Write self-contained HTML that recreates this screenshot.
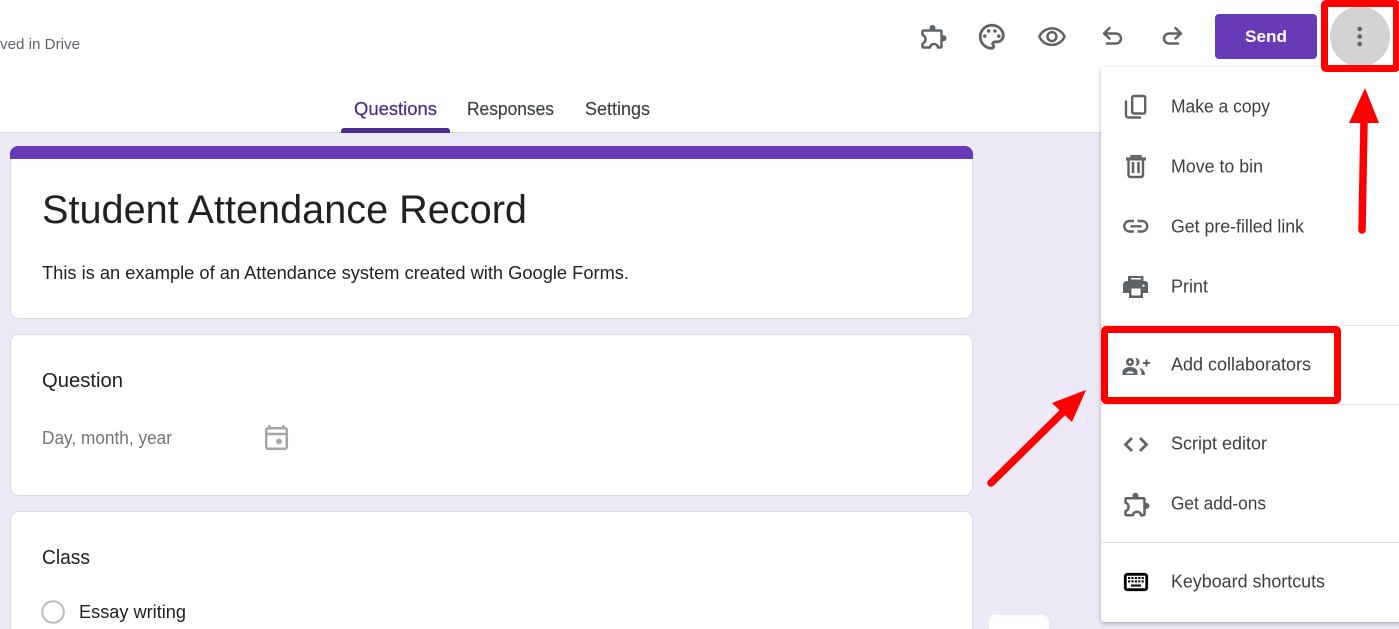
<!DOCTYPE html>
<html><head><meta charset="utf-8"><style>
html,body{margin:0;padding:0;width:1399px;height:629px;overflow:hidden;background:#fff}
svg{display:block}
text{font-family:"Liberation Sans",sans-serif}
</style></head><body>
<svg width="1399" height="629" viewBox="0 0 1399 629" xmlns="http://www.w3.org/2000/svg">
<defs>
<filter id="sh" x="-10%" y="-5%" width="120%" height="110%"><feDropShadow dx="0" dy="1.5" stdDeviation="2" flood-color="#000" flood-opacity=".3"/></filter>
<g id="ext">
<path fill="none" stroke="#5f6368" stroke-width="2.500" stroke-linejoin="round" d="M923.500 30.500H940.500A1 1 0 0 1 941.500 31.500V46.500A1 1 0 0 1 940.500 47.500H938A4 3.500 0 0 0 930 47.500H923.500A1 1 0 0 1 922.500 46.500V43.500A4.500 4.500 0 0 0 922.500 35V31.500A1 1 0 0 1 923.500 30.500Z"/>
<circle cx="932.500" cy="28" r="3" fill="#5f6368"/>
<circle cx="943.500" cy="38.200" r="3" fill="#5f6368"/>
</g>
</defs>
<rect width="1399" height="629" fill="#ede9f7"/>
<rect width="1399" height="132" fill="#fff"/>
<rect y="132" width="1399" height="1" fill="#dadce0"/>
<text x="0" y="49" font-size="14.5" fill="#5f6368" textLength="80" lengthAdjust="spacingAndGlyphs">ved in Drive</text>

<use href="#ext"/>
<g fill="#5f6368">
<g transform="translate(976.4 21.4) scale(1.28)" stroke="#5f6368" stroke-width=".25"><path d="M12 22C6.49 22 2 17.51 2 12S6.49 2 12 2s10 4.04 10 9c0 3.31-2.69 6-6 6h-1.77c-.28 0-.5.22-.5.5 0 .12.05.23.13.33.41.47.64 1.06.64 1.67 0 1.38-1.12 2.5-2.5 2.5zm0-18c-4.41 0-8 3.59-8 8s3.59 8 8 8c.28 0 .5-.22.5-.5 0-.16-.08-.28-.14-.35-.41-.46-.63-1.05-.63-1.65 0-1.38 1.12-2.5 2.5-2.5H16c2.21 0 4-1.79 4-4 0-3.86-3.59-7-8-7z"/><circle cx="6.5" cy="11.5" r="1.3"/><circle cx="9.5" cy="7.5" r="1.3"/><circle cx="14.5" cy="7.5" r="1.3"/><circle cx="17.5" cy="11.5" r="1.3"/></g>
<path transform="translate(1036.7 22) scale(1.27)" d="M12 6c3.79 0 7.17 2.13 8.82 5.5C19.17 14.87 15.79 17 12 17s-7.17-2.13-8.82-5.5C4.83 8.13 8.21 6 12 6m0-2C7 4 2.73 7.11 1 11.5 2.73 15.89 7 19 12 19s9.27-3.11 11-7.5C21.27 7.11 17 4 12 4zm0 5c1.38 0 2.5 1.12 2.5 2.5S13.38 14 12 14s-2.5-1.12-2.5-2.5S10.62 9 12 9m0-2c-2.48 0-4.5 2.02-4.5 4.5S9.52 16 12 16s4.5-2.02 4.5-4.5S14.48 7 12 7z"/>
</g>
<g fill="none" stroke="#5f6368" stroke-width="2.500" stroke-linecap="round" stroke-linejoin="round">
<path d="M1109.500 28L1104 33.500L1109.500 38.500M1104.500 33.500H1116A5 5 0 0 1 1116 43.500H1107"/>
<path d="M1175.500 28L1181 33.500L1175.500 38.500M1180.500 33.500H1169A5 5 0 0 0 1169 43.500H1178"/>
</g>

<rect x="1215" y="14" width="102" height="45" rx="4" fill="#673ab7"/>
<text x="1245" y="42" font-size="17" font-weight="700" fill="#fff" textLength="42" lengthAdjust="spacingAndGlyphs">Send</text>

<circle cx="1360" cy="36.500" r="30" fill="#d3d3d3"/>
<g fill="#5f6368"><circle cx="1359.700" cy="29" r="2.300"/><circle cx="1359.700" cy="36.500" r="2.300"/><circle cx="1359.700" cy="44" r="2.300"/></g>

<text x="354" y="115" font-size="18" fill="#4a2a8c" stroke="#4a2a8c" stroke-width=".2" textLength="83" lengthAdjust="spacingAndGlyphs">Questions</text>
<text x="467" y="115" font-size="18" fill="#3c4043" stroke="#3c4043" stroke-width=".15" textLength="87" lengthAdjust="spacingAndGlyphs">Responses</text>
<text x="585" y="115" font-size="18" fill="#3c4043" stroke="#3c4043" stroke-width=".15" textLength="65" lengthAdjust="spacingAndGlyphs">Settings</text>
<path d="M341 133v-2a3 3 0 0 1 3-3h103a3 3 0 0 1 3 3v2z" fill="#4b2a92"/>

<rect x="10.500" y="146.500" width="962" height="172" rx="8" fill="#fff" stroke="#dadce0"/>
<path d="M10 159v-5a8 8 0 0 1 8-8h947a8 8 0 0 1 8 8v5z" fill="#673ab7"/>
<text x="42" y="223" font-size="40" fill="#202124" textLength="485" lengthAdjust="spacingAndGlyphs">Student Attendance Record</text>
<text x="42" y="279" font-size="18" fill="#202124" textLength="587" lengthAdjust="spacingAndGlyphs">This is an example of an Attendance system created with Google Forms.</text>

<rect x="10.500" y="334.500" width="962" height="161" rx="8" fill="#fff" stroke="#dadce0"/>
<text x="42" y="387" font-size="20" fill="#202124" textLength="81" lengthAdjust="spacingAndGlyphs">Question</text>
<text x="42" y="444" font-size="18" fill="#70757a" textLength="130" lengthAdjust="spacingAndGlyphs">Day, month, year</text>
<g fill="none" stroke="#a2a5a9" stroke-width="2.500"><rect x="266.200" y="428.200" width="20.600" height="20.600" rx="2"/><path d="M266 434H287M269.500 425V429M283.500 425V429"/></g>
<circle cx="279" cy="441.500" r="2.900" fill="#a2a5a9"/>

<rect x="10.500" y="511.500" width="962" height="140" rx="8" fill="#fff" stroke="#dadce0"/>
<text x="42" y="564" font-size="20" fill="#202124" textLength="48" lengthAdjust="spacingAndGlyphs">Class</text>
<circle cx="53" cy="612" r="10.800" fill="#fff" stroke="#bdbdbd" stroke-width="2"/>
<text x="79" y="618" font-size="18" fill="#202124" textLength="107" lengthAdjust="spacingAndGlyphs">Essay writing</text>
<rect x="989" y="615" width="60" height="40" rx="7" fill="#fff"/>

<rect x="1101" y="67" width="320" height="555" rx="4" fill="#fff" filter="url(#sh)"/>
<g fill="#e0e0e0"><rect x="1101" y="325" width="298" height="1"/><rect x="1101" y="404" width="298" height="1"/><rect x="1101" y="542" width="298" height="1"/></g>

<g font-size="18" fill="#3c4043">
<text x="1171" y="112.700" textLength="99" lengthAdjust="spacingAndGlyphs">Make a copy</text>
<text x="1171" y="172.700" textLength="92" lengthAdjust="spacingAndGlyphs">Move to bin</text>
<text x="1171" y="232.700" textLength="133" lengthAdjust="spacingAndGlyphs">Get pre-filled link</text>
<text x="1171" y="292.700" textLength="37" lengthAdjust="spacingAndGlyphs">Print</text>
<text x="1171" y="370.700" textLength="140" lengthAdjust="spacingAndGlyphs">Add collaborators</text>
<text x="1171" y="449.700" textLength="96" lengthAdjust="spacingAndGlyphs">Script editor</text>
<text x="1171" y="509.700" textLength="95" lengthAdjust="spacingAndGlyphs">Get add-ons</text>
<text x="1171" y="587.700" textLength="154" lengthAdjust="spacingAndGlyphs">Keyboard shortcuts</text>
</g>

<g fill="none" stroke="#5f6368" stroke-width="2.400">
<rect x="1132.200" y="96" width="13" height="17.500" rx="1.500"/>
<path d="M1126 100.500V115a2.500 2.500 0 0 0 2.500 2.500H1141"/>
<path d="M1128.500 159V175a2 2 0 0 0 2 2H1141a2 2 0 0 0 2-2V159"/>
<path d="M1126 159H1146" stroke-width="3"/>
<path d="M1131.500 158V156.200H1140.500V158"/>
<path d="M1133 162V173M1138.500 162V173" stroke-width="2.600"/>
<path d="M1134 221H1129.500A5.250 5.250 0 0 0 1129.500 231.500H1134M1137.500 221H1142A5.250 5.250 0 0 1 1142 231.500H1137.500M1130.500 226.300H1141.500" stroke-width="2.400"/>
<path d="M1132 438L1125.500 444.500L1132 451M1140 438L1146.500 444.500L1140 451" stroke-width="2.800"/>
</g>
<g fill="#5f6368">
<path d="M1128 276H1143.500V283H1128Z"/>
<path d="M1127 281H1145A3 3 0 0 1 1148 284V293H1143V298H1129V293H1123V285A4 4 0 0 1 1127 281Z"/>
<circle cx="1130" cy="362" r="4"/>
<path d="M1122.500 375V372.500C1122.500 368.500 1126.500 367 1130 367S1137.500 368.500 1137.500 372.500V375Z"/>
<path d="M1135.500 358A4 4 0 0 1 1135.500 366C1137 363.500 1137 360.500 1135.500 358Z"/>
<path d="M1139 367.500C1142.500 368.500 1145 371 1145 375H1141.500C1141.500 372 1141 369.500 1139 367.500Z"/>
<rect x="1143" y="362" width="7" height="2"/><rect x="1145.500" y="359.500" width="2" height="7"/>
</g>
<rect x="1131.500" y="288.500" width="9" height="7" fill="#fff"/>
<rect x="1131" y="278" width="10" height="1.500" fill="#fff"/>
<circle cx="1143.500" cy="285.700" r="1.100" fill="#fff"/>
<circle cx="1130" cy="362" r="1.400" fill="#fff"/>
<path d="M1126 373.500C1127 370.500 1133 370.500 1134 373.500Z" fill="#fff"/>
<use href="#ext" transform="translate(203 467.700)"/>
<rect x="1125.300" y="574.300" width="21.400" height="15.400" rx="2" fill="none" stroke="#000" stroke-width="2.800"/>
<g fill="#000">
<rect x="1128" y="577" width="2.200" height="2"/><rect x="1131.400" y="577" width="2.200" height="2"/><rect x="1134.800" y="577" width="2.200" height="2"/><rect x="1138.200" y="577" width="2.200" height="2"/><rect x="1141.600" y="577" width="2.200" height="2"/>
<rect x="1128" y="580.400" width="2.200" height="2"/><rect x="1131.400" y="580.400" width="2.200" height="2"/><rect x="1134.800" y="580.400" width="2.200" height="2"/><rect x="1138.200" y="580.400" width="2.200" height="2"/><rect x="1141.600" y="580.400" width="2.200" height="2"/>
<rect x="1131" y="584.500" width="10" height="2"/>
</g>

<g fill="none" stroke="#f00" stroke-width="7">
<rect x="1324.500" y="3.500" width="72" height="65" rx="1.500"/>
<rect x="1104.500" y="329.500" width="233" height="71" rx="1.500"/>
</g>
<g fill="#f00" stroke="none">
<path d="M1365 88L1349 123H1379Z"/>
<path d="M1086 390L1052 403L1072 422Z"/>
</g>
<g stroke="#f00" stroke-linecap="round" fill="none">
<path d="M1364 122L1362 230" stroke-width="7.500"/>
<path d="M1063 412L991 483" stroke-width="7.500"/>
</g>
</svg>
</body></html>
